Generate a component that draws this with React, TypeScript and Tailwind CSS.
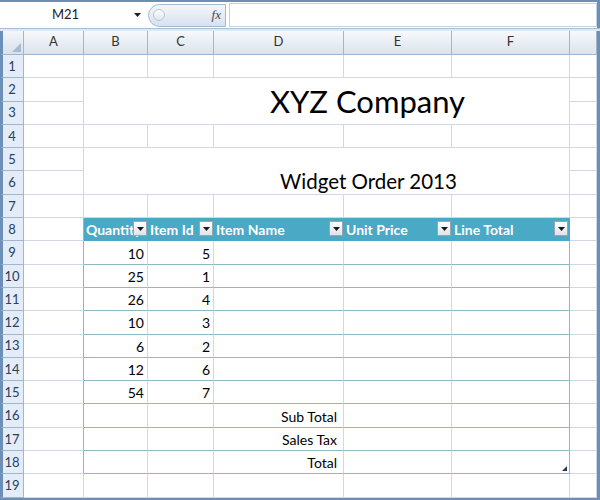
import type { ReactNode } from "react";

/* Excel 2007-style sheet: formula bar, headers, a teal order table. */

const COLS = ["A", "B", "C", "D", "E", "F", ""];
const QTY: [number, number][] = [
  [10, 5],
  [25, 1],
  [26, 4],
  [10, 3],
  [6, 2],
  [12, 6],
  [54, 7],
];
const HEAD = ["Quantity", "Item Id", "Item Name", "Unit Price", "Line Total"];
const TOTALS: Record<number, string> = { 16: "Sub Total", 17: "Sales Tax", 18: "Total" };

const grid = "border-r border-b border-[#d0d7e5]";
const tbl = "border-r border-b border-r-[#d0d7e5] border-b-[#8fb8c3]";

function FilterButton() {
  return (
    <span className="absolute right-[1px] top-[3px] flex h-[15px] w-[14px] items-center justify-center border border-[#9aa5b1] bg-gradient-to-b from-white to-[#dfe3e8]">
      <svg width="7" height="4" viewBox="0 0 7 4">
        <path d="M0 0h7L3.5 4z" fill="#1a1a1a" />
      </svg>
    </span>
  );
}

function RowHead({ n }: { n: number }) {
  return (
    <div className="flex items-center justify-center border-r border-b border-l-[3px] border-[#9eb6ce] border-l-[#6c8fb8] bg-[#e4ecf7] pt-[1px] pr-[2px] text-[13px] text-[#27415f]">
      {n}
    </div>
  );
}

function Cell({
  className = "",
  children,
}: {
  className?: string;
  children?: ReactNode;
}) {
  return <div className={`relative flex items-center overflow-hidden ${className}`}>{children}</div>;
}

function Row({ n }: { n: number }) {
  const inTable = n >= 8 && n <= 18;
  const aBorder = inTable ? "border-r border-b border-r-[#8fb8c3] border-b-[#d0d7e5]" : grid;
  const cells: ReactNode[] = [<RowHead key="h" n={n} />, <Cell key="a" className={aBorder} />];

  if (n === 2) {
    cells.push(
      <Cell key="t" className={`col-span-5 row-span-2 justify-center pl-[82px] ${grid}`}>
        <span className="text-[31px] leading-none text-black">XYZ Company</span>
      </Cell>,
    );
  } else if (n === 5) {
    cells.push(
      <Cell key="t" className={`col-span-5 row-span-2 !items-end justify-center pb-[2px] pl-[84px] ${grid}`}>
        <span className="text-[20.5px] leading-none text-black">Widget Order 2013</span>
      </Cell>,
    );
  } else if (n === 3 || n === 6) {
    // covered by merged cell
  } else if (n === 8) {
    HEAD.forEach((h, i) =>
      cells.push(
        <Cell
          key={h}
          className={`bg-[#4aa9c4] pl-[2px] pt-[1px] text-[14px] font-bold whitespace-nowrap text-white border-b border-[#4aa9c4] ${i === 4 ? "border-r border-r-[#4aa9c4]" : ""}`}
        >
          {h}
          <FilterButton />
        </Cell>,
      ),
    );
  } else if (inTable) {
    const d = QTY[n - 9];
    for (let i = 0; i < 5; i++) {
      let content: ReactNode = null;
      let align = "";
      if (d && i < 2) {
        content = d[i];
        align = "justify-end pr-[3px]";
      }
      if (i === 2 && TOTALS[n]) {
        content = TOTALS[n];
        align = "justify-end pr-[6px]";
      }
      const last = i === 4 ? "!border-r-[#8fb8c3]" : "";
      const bottom = n === 18 ? "!border-b-[#8fb8c3]" : "";
      cells.push(
        <Cell key={i} className={`${tbl} ${last} ${bottom} ${align} pt-[1px] text-[14px] text-black`}>
          {content}
          {n === 18 && i === 4 && (
            <svg className="absolute right-[2px] bottom-[2px]" width="5" height="5" viewBox="0 0 5 5">
              <path d="M5 0v5H0z" fill="#1f3b57" />
            </svg>
          )}
        </Cell>,
      );
    }
  } else {
    for (let i = 0; i < 5; i++) cells.push(<Cell key={i} className={grid} />);
  }

  cells.push(<Cell key="g" className={grid} />);
  return <>{cells}</>;
}

export default function App() {
  return (
    <div
      className="flex h-[500px] w-[600px] flex-col overflow-hidden bg-white"
      style={{ fontFamily: "Lato, 'Liberation Sans', sans-serif" }}
    >
      <div className="h-[2px] shrink-0 bg-[#6c8fb8]" />
      <div className="flex h-[26px] shrink-0 items-center bg-white">
        <div className="relative flex h-full w-[145px] items-center justify-center text-[13px] text-[#222]">
          <span className="-ml-[14px]">M21</span>
          <svg className="absolute right-[4px] top-[11px]" width="7" height="4" viewBox="0 0 7 4">
            <path d="M0 0h7L3.5 4z" fill="#222" />
          </svg>
        </div>
        <div className="ml-[3px] flex h-[23px] w-[78px] items-center justify-between rounded-l-full border border-[#a7b9cf] bg-gradient-to-b from-[#f4f7fb] to-[#d7e1ee] pl-[4px] pr-[4px]">
          <span className="h-[12px] w-[12px] rounded-full border border-[#b7c6d8] bg-gradient-to-b from-white to-[#dfe6ef]" />
          <span className="text-[13px] italic text-[#4a4a4a]" style={{ fontFamily: "'Liberation Serif', serif" }}>
            fx
          </span>
        </div>
        <div className="ml-[3px] h-[24px] flex-1 border border-[#c5d2e2] bg-white" />
        <div className="h-full w-[3px] bg-[#6c8fb8]" />
      </div>
      <div className="h-[3px] shrink-0 border-t border-[#a9bfd6] bg-[#dfe7f1]" />
      <div className="flex shrink-0">
        <div className="grid flex-1 grid-cols-[24px_60px_64px_66px_130px_108px_118px_27px] grid-rows-[24px] auto-rows-[23.3px]">
          <div className="relative border-r border-b border-l-[3px] border-[#9eb6ce] border-l-[#6c8fb8] bg-gradient-to-b from-[#f3f6fa] to-[#d9e1ec]">
            <svg className="absolute right-[2px] bottom-[2px]" width="9" height="9" viewBox="0 0 9 9">
              <path d="M9 0v9H0z" fill="#aab9cc" />
            </svg>
          </div>
          {COLS.map((c, i) => (
            <div
              key={i}
              className="flex items-center justify-center border-r border-b border-[#9eb6ce] bg-gradient-to-b from-[#f7f9fc] to-[#dce3ec] pb-[2px] text-[13px] text-[#333]"
            >
              {c}
            </div>
          ))}
          {Array.from({ length: 19 }, (_, i) => (
            <Row key={i} n={i + 1} />
          ))}
        </div>
        <div className="w-[3px] bg-[#6c8fb8]" />
      </div>
      <div className="flex-1 bg-[#6c8fb8]" />
    </div>
  );
}
